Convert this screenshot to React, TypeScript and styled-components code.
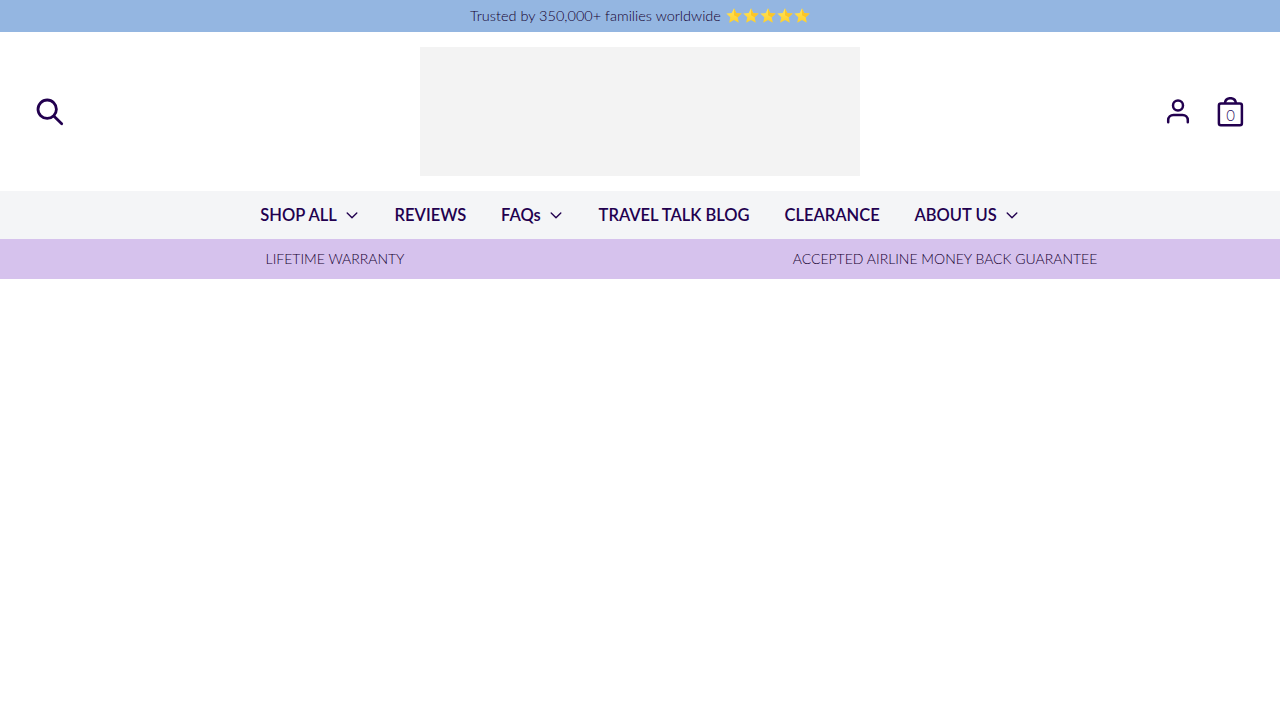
import React from "react";
import styled, { createGlobalStyle } from "styled-components";

const Global = createGlobalStyle`
  html, body { margin: 0; padding: 0; background: #fff; }
  body { font-family: Lato, "Open Sans", sans-serif; color: #22004f; }
  * { box-sizing: border-box; }
`;

const Announcement = styled.div`
  height: 32px;
  background: #94b6e1;
  display: flex;
  align-items: center;
  justify-content: center;
  gap: 5px;
  padding-bottom: 2px;
  font-size: 14.5px;
  font-weight: 300;
  color: #14002f;
`;

const Stars = styled.span`
  display: inline-flex;
  gap: 1px;
`;

const Header = styled.header`
  height: 159px;
  display: grid;
  grid-template-columns: 1fr 440px 1fr;
  align-items: center;
  padding: 0 36px;
`;

const HeaderLeft = styled.div`
  display: flex;
  align-items: center;
`;

const HeaderRight = styled.div`
  display: flex;
  align-items: center;
  justify-content: flex-end;
  gap: 25px;
`;

const LogoPlaceholder = styled.div`
  height: 129px;
  background: #f3f3f3;
`;

const IconLink = styled.a`
  display: flex;
  position: relative;
  color: #22004f;
`;

const CartCount = styled.span`
  position: absolute;
  left: 1px;
  right: 0;
  top: 10px;
  text-align: center;
  font-size: 15px;
  font-weight: 300;
  line-height: 16px;
  color: #2a0d5e;
`;

const Nav = styled.nav`
  height: 48px;
  background: #f4f5f7;
  display: flex;
  align-items: center;
  justify-content: center;
  gap: 34.8px;
`;

const NavItem = styled.a`
  display: flex;
  align-items: center;
  gap: 7px;
  font-size: 16.5px;
  font-weight: 600;
  color: #22004f;
  white-space: nowrap;
`;

const Usps = styled.div`
  height: 40px;
  background: #d6c2ed;
  display: grid;
  grid-template-columns: 1fr 1fr;
  align-items: center;
  padding: 0 30px 2px;
`;

const Usp = styled.div`
  text-align: center;
  font-size: 14px;
  font-weight: 300;
  color: #14002f;
`;

const Star = ({ id }: { id: string }) => (
  <svg width="16" height="15" viewBox="0 0 16 15" aria-hidden="true">
    <defs>
      <linearGradient id={id} x1="0" y1="0" x2="0" y2="1">
        <stop offset="0" stopColor="#ffe45c" />
        <stop offset="1" stopColor="#ffd02b" />
      </linearGradient>
    </defs>
    <path
      d="M8 0.3 L10.3 5 L15.7 5.6 L11.7 9.2 L12.8 14.7 L8 12 L3.2 14.7 L4.3 9.2 L0.3 5.6 L5.7 5 Z"
      fill={`url(#${id})`}
    />
    <path d="M8 0.3 L10.3 5 L15.7 5.6 L11.7 9.2 L8 7.2 Z" fill="#f9bd1d" opacity="0.75" />
  </svg>
);

const Chevron = () => (
  <svg width="16" height="16" viewBox="0 0 16 16" fill="none" stroke="currentColor" strokeWidth="1.4" strokeLinecap="round" strokeLinejoin="round" aria-hidden="true">
    <path d="M3.2 6 L8 10.7 L12.8 6" />
  </svg>
);

const SearchIcon = () => (
  <svg width="28" height="28" viewBox="0 0 28 28" fill="none" stroke="currentColor" strokeWidth="2.8" strokeLinecap="round" aria-hidden="true">
    <circle cx="11.2" cy="11.2" r="9.2" />
    <path d="M17.8 18 L25.7 25.7" />
  </svg>
);

const UserIcon = () => (
  <svg width="26" height="28" viewBox="0 0 26 28" fill="none" stroke="currentColor" strokeWidth="2.5" strokeLinecap="round" aria-hidden="true">
    <circle cx="13" cy="7.5" r="5" />
    <path d="M3.2 24.3 V22 C3.2 19 5.5 16.9 8.5 16.9 H17.5 C20.5 16.9 22.8 19 22.8 22 V24.3" />
  </svg>
);

const BagIcon = () => (
  <svg width="28" height="30" viewBox="0 0 28 30" fill="none" stroke="currentColor" strokeWidth="2.5" strokeLinejoin="round" aria-hidden="true">
    <rect x="2.9" y="6.4" width="23" height="21.9" rx="2" />
    <path d="M8.9 7 C8.9 3 11.4 1.2 14.4 1.2 C17.4 1.2 19.9 3 19.9 7" />
  </svg>
);

const navItems = [
  { label: "SHOP ALL", menu: true },
  { label: "REVIEWS", menu: false },
  { label: "FAQs", menu: true },
  { label: "TRAVEL TALK BLOG", menu: false },
  { label: "CLEARANCE", menu: false },
  { label: "ABOUT US", menu: true },
];

export default function App() {
  return (
    <>
      <Global />
      <Announcement>
        Trusted by 350,000+ families worldwide
        <Stars>
          {[0, 1, 2, 3, 4].map((i) => (
            <Star key={i} id={`star-${i}`} />
          ))}
        </Stars>
      </Announcement>
      <Header>
        <HeaderLeft>
          <IconLink aria-label="Search">
            <SearchIcon />
          </IconLink>
        </HeaderLeft>
        <LogoPlaceholder />
        <HeaderRight>
          <IconLink aria-label="Account">
            <UserIcon />
          </IconLink>
          <IconLink aria-label="Cart">
            <BagIcon />
            <CartCount>0</CartCount>
          </IconLink>
        </HeaderRight>
      </Header>
      <Nav>
        {navItems.map((item) => (
          <NavItem key={item.label}>
            {item.label}
            {item.menu && <Chevron />}
          </NavItem>
        ))}
      </Nav>
      <Usps>
        <Usp>LIFETIME WARRANTY</Usp>
        <Usp>ACCEPTED AIRLINE MONEY BACK GUARANTEE</Usp>
      </Usps>
    </>
  );
}
